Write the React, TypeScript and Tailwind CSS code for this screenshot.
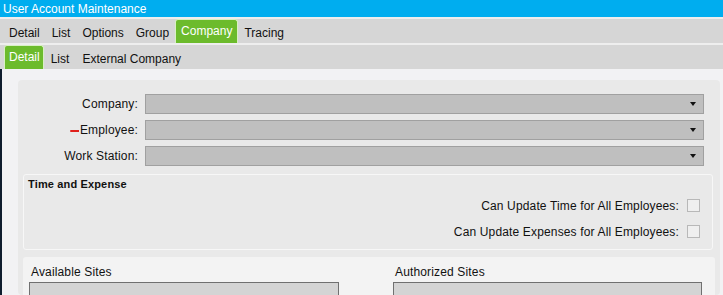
import React from "react";

const tabs = ["Detail", "List", "Options", "Group", "Company", "Tracing"];
const subTabs = ["Detail", "List", "External Company"];

function Arrow() {
  return (
    <svg width="6" height="4" viewBox="0 0 6 4" className="mr-[7px]">
      <polygon points="0,0 6,0 3,4" fill="#111" />
    </svg>
  );
}

function Field({ label, required }: { label: string; required?: boolean }) {
  return (
    <div className="flex h-[20px] items-center">
      <div className="flex w-[115px] items-center justify-end text-[12px] text-[#111]">
        {required && <span className="mr-[1px] mt-[1px] h-[2px] w-[9px] rounded-l-full bg-[#e0201c]" />}
        {label}
      </div>
      <div className="ml-[7px] flex h-[20px] flex-1 items-center justify-end border border-[#a0a0a0] bg-[#bfbfbf]">
        <Arrow />
      </div>
    </div>
  );
}

function Check({ label }: { label: string }) {
  return (
    <div className="flex h-[13px] items-center justify-end">
      <span className="text-[12px] text-[#111]">{label}</span>
      <span className="ml-[8px] mr-[12px] h-[13px] w-[13px] border border-[#b8b8b8] bg-[#efefef]" />
    </div>
  );
}

export default function App() {
  return (
    <div
      className="h-[295px] w-[723px] overflow-hidden bg-[#f2f2f4]"
      style={{ fontFamily: '"Liberation Sans", Arial, sans-serif' }}
    >
      <div className="flex h-[17px] items-center bg-[#00adef] pl-[3px] text-[12px] text-white">
        User Account Maintenance
      </div>
      <div className="h-[2px] bg-[#eeeeee]" />
      <div className="flex h-[24px] items-end bg-[#d6d6d6] pl-[3px] text-[12px] text-[#111]">
        {tabs.map((t) =>
          t === "Company" ? (
            <div
              key={t}
              className="flex h-[24px] items-center rounded-t-[3px] border border-b-0 border-[#d9f0c4] bg-[#6cbb2c] px-[5px] pb-[2px] text-white"
            >
              {t}
            </div>
          ) : (
            <div key={t} className="flex h-[24px] items-center px-[6px] pt-[3px]">
              {t}
            </div>
          )
        )}
      </div>
      <div className="h-[2px] bg-[#eeeeee]" />
      <div className="flex h-[24px] items-end bg-[#d6d6d6] pl-[4px] text-[12px] text-[#111]">
        {subTabs.map((t, i) =>
          i === 0 ? (
            <div
              key={t}
              className="flex h-[24px] items-center rounded-t-[3px] border border-b-0 border-[#d9f0c4] bg-[#6cbb2c] pl-[4px] pr-[3px] pb-[2px] text-white"
            >
              {t}
            </div>
          ) : (
            <div key={t} className="ml-[1px] flex h-[24px] items-center px-[6px] pt-[3px]">
              {t}
            </div>
          )
        )}
      </div>
      <div className="flex h-[226px] border-l-2 border-[#0f1d2e] pt-[11px] pl-[16px] pr-[3px] tracking-[0.15px]">
        <div className="flex flex-1 flex-col rounded-[4px] bg-[#e9e9e9] px-[5px] pt-[14px]">
          <div className="flex shrink-0 flex-col gap-[6px] pr-[11px]">
            <Field label="Company:" />
            <Field label="Employee:" required />
            <Field label="Work Station:" />
          </div>
          <div className="mr-[2px] mt-[8px] flex h-[76px] shrink-0 flex-col rounded-[3px] border border-[#f7f7f7] pl-[4px] pt-[2px]">
            <div className="text-[11px] font-bold leading-[14px] text-[#111]">Time and Expense</div>
            <div className="mt-[8px] flex flex-col gap-[13px]">
              <Check label="Can Update Time for All Employees:" />
              <Check label="Can Update Expenses for All Employees:" />
            </div>
          </div>
          <div className="mt-[7px] flex flex-1 gap-[54px] rounded-t-[3px] bg-[#f3f3f3] pl-[6px] pt-[8px]">
            <div className="flex flex-col">
              <div className="ml-[2px] text-[12px] leading-[14px] text-[#111]">Available Sites</div>
              <div className="mt-[3px] h-[40px] w-[310px] border border-[#707070] bg-[#d4d4d4]" />
            </div>
            <div className="flex flex-col">
              <div className="ml-[2px] text-[12px] leading-[14px] text-[#111]">Authorized Sites</div>
              <div className="mt-[3px] h-[40px] w-[309px] border border-[#707070] bg-[#d4d4d4]" />
            </div>
          </div>
        </div>
      </div>
    </div>
  );
}
